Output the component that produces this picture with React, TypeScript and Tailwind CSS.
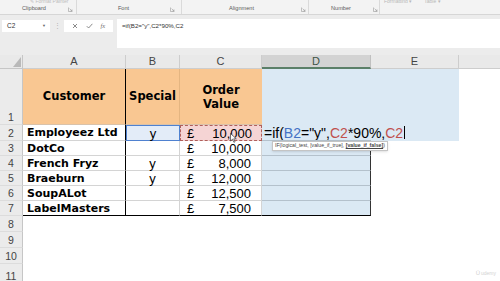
import React from "react";

const orders = [
  { name: "DotCo", special: "", value: "10,000" },
  { name: "French Fryz", special: "y", value: "8,000" },
  { name: "Braeburn", special: "y", value: "12,000" },
  { name: "SoupALot", special: "", value: "12,500" },
  { name: "LabelMasters", special: "", value: "7,500" },
];

function Launcher() {
  return (
    <svg width="5" height="5" viewBox="0 0 5 5" className="shrink-0">
      <path d="M0.5 0.5v4h4" fill="none" stroke="#9a9a9a" strokeWidth="0.6" />
      <path d="M1.6 1.6l2.4 2.4M4 2.4V4H2.4" fill="none" stroke="#9a9a9a" strokeWidth="0.6" />
    </svg>
  );
}

function Ribbon() {
  return (
    <div className="flex h-[15px] bg-[#f3f3f3] border-b border-[#d6d6d6] text-[5.6px] text-[#5a5a5a] leading-none">
      <div className="w-[77px] flex flex-col justify-between border-r border-[#dadada] pb-[2px]">
        <div className="h-[3px] leading-[2px] overflow-hidden pl-[30px] text-[#bdbdbd] text-[5px] whitespace-nowrap">
          ✎ Format Painter
        </div>
        <div className="flex items-center">
          <span className="w-[68px] text-center">Clipboard</span>
          <Launcher />
        </div>
      </div>
      <div className="w-[105px] flex flex-col justify-end border-r border-[#dadada] pb-[2px]">
        <div className="flex items-center">
          <span className="w-[93px] text-center">Font</span>
          <Launcher />
        </div>
      </div>
      <div className="w-[127px] flex flex-col justify-end border-r border-[#dadada] pb-[2px]">
        <div className="flex items-center">
          <span className="w-[119px] text-center">Alignment</span>
          <Launcher />
        </div>
      </div>
      <div className="w-[71px] flex flex-col justify-end border-r border-[#dadada] pb-[2px]">
        <div className="flex items-center">
          <span className="w-[64px] text-center">Number</span>
          <Launcher />
        </div>
      </div>
      <div className="flex-1 h-[3px] leading-[2px] overflow-hidden pl-[4px] text-[#b8b8b8] text-[5px] flex gap-[12px] whitespace-nowrap">
        <span>Formatting ▾</span>
        <span>Table ▾</span>
      </div>
    </div>
  );
}

function FormulaBar() {
  return (
    <div className="flex h-[40px] bg-[#ececec] pt-[4px] pb-[7px] font-['Liberation_Sans',Arial,sans-serif]">
      <div className="w-[117px] shrink-0 flex items-start pt-[1px]">
        <div className="ml-[2px] w-[48px] h-[12px] bg-white flex items-center justify-between pl-[5px] pr-[4px] text-[6.5px] text-[#333]">
          <span>C2</span>
          <span className="text-[4px] text-[#666]">▼</span>
        </div>
        <div className="w-[14px] text-center text-[#b0b0b0] text-[7px] leading-[12px]">⋮</div>
        <div className="w-[49px] h-[12px] bg-white flex items-center justify-around px-[4px]">
          <svg width="6" height="6" viewBox="0 0 6 6">
            <path d="M1 1l4 4M5 1l-4 4" stroke="#6e6e6e" strokeWidth="0.8" />
          </svg>
          <svg width="7" height="6" viewBox="0 0 7 6">
            <path d="M0.8 3.2l1.8 1.8 3.8-4.2" fill="none" stroke="#6e6e6e" strokeWidth="0.8" />
          </svg>
          <span className="text-[6.5px] italic text-[#6e6e6e] font-['Liberation_Serif',serif]">fx</span>
        </div>
      </div>
      <div className="flex-1 bg-white pl-[5px] pt-[3px] text-[6.2px] leading-[7px] text-[#333]">
        =if(B2="y",C2*90%,C2
      </div>
    </div>
  );
}

function RowHead({ label, className = "" }: { label: string; className?: string }) {
  return (
    <div
      className={`w-[23px] shrink-0 bg-[#ebebeb] border-r border-[#c6c6c6] border-b border-b-[#dcdcdc] flex justify-center items-end text-[10.5px] leading-[13px] text-[#444] ${className}`}
    >
      {label}
    </div>
  );
}

const bold = "font-['DejaVu_Sans',Verdana,sans-serif] font-bold text-black";

function Pointer() {
  return (
    <svg width="7" height="10" viewBox="0 0 7 10" className="absolute left-[49px] top-[7px]">
      <path d="M0.5 0.5v7.5l2-1.8 1.4 3.1 1.2-0.5-1.4-3h2.6z" fill="white" stroke="#222" strokeWidth="0.6" />
    </svg>
  );
}

export default function App() {
  return (
    <div className="relative w-[500px] h-[281px] overflow-hidden bg-white font-['Liberation_Sans',Arial,sans-serif]">
      <Ribbon />
      <FormulaBar />

      {/* column headers */}
      <div className="flex h-[14px] text-[11px] text-[#444] leading-none">
        <div className="w-[23px] shrink-0 bg-[#e9e9e9] border-r border-b border-[#c6c6c6]">
          <svg width="22" height="13" viewBox="0 0 22 13">
            <polygon points="21,2 21,12 13,12" fill="#b9b9b9" />
          </svg>
        </div>
        <div className="w-[103px] bg-[#e9e9e9] border-r border-b border-[#cdcdcd] flex items-center justify-center">A</div>
        <div className="w-[54px] bg-[#e9e9e9] border-r border-b border-[#cdcdcd] flex items-center justify-center">B</div>
        <div className="w-[82px] bg-[#e9e9e9] border-r border-b border-[#cdcdcd] flex items-center justify-center">C</div>
        <div className="w-[109px] bg-[#d3d3d3] border-r border-[#c0c0c0] border-b-2 border-b-[#5b7f68] flex items-center justify-center text-[#3d5546]">D</div>
        <div className="w-[88px] bg-[#e9e9e9] border-r border-b border-[#cdcdcd] flex items-center justify-center">E</div>
        <div className="flex-1 bg-[#e9e9e9] border-b border-[#cdcdcd]" />
      </div>

      {/* row 1 */}
      <div className="flex h-[56px] text-[11.5px]">
        <RowHead label="1" />
        <div className={`w-[103px] bg-[#f9c792] border-r border-r-black border-b border-b-[#d9c2aa] flex items-center justify-center ${bold}`}>
          Customer
        </div>
        <div className={`w-[54px] bg-[#f9c792] border-r border-r-[#e4b581] border-b border-b-[#d9c2aa] flex items-center justify-center ${bold}`}>
          Special
        </div>
        <div className={`w-[82px] bg-[#f9c792] border-b border-b-[#d9c2aa] flex items-center justify-center text-center leading-[14px] ${bold}`}>
          Order
          <br />
          Value
        </div>
        <div className="w-[109px] bg-[#dbe9f4]" />
        <div className="w-[88px] bg-[#dbe9f4]" />
        <div className="flex-1" />
      </div>

      {/* row 2 (editing) */}
      <div className="flex h-[16px]">
        <RowHead label="2" className="bg-[#dcdcdc]" />
        <div className={`w-[103px] border-r border-r-black border-b border-b-[#d4d4d4] flex items-center pl-[4px] text-[11px] leading-none ${bold}`}>
          Employeez Ltd
        </div>
        <div className="w-[54px] bg-[#e3ecf8] border border-[#4f81d0] flex items-center justify-center text-[13px] leading-none">
          y
        </div>
        <div className="relative w-[82px] bg-[#f5d4d4] border border-dashed border-[#b0605c] flex items-center justify-between pl-[6px] pr-[9px] text-[13px] leading-none">
          <span>£</span>
          <span>10,000</span>
          <Pointer />
        </div>
        <div className="relative w-[197px] bg-[#dbe9f4] flex flex-col">
          <div className="flex-1 flex items-center pl-[2px] whitespace-nowrap text-[14px] leading-none text-black">
            <span>=if(</span>
            <span className="text-[#4472c4]">B2</span>
            <span>="y",</span>
            <span className="text-[#c0504d]">C2</span>
            <span>*90%,</span>
            <span className="text-[#c0504d]">C2</span>
            <span className="ml-[1px] w-px h-[13px] bg-black" />
          </div>
          <div className="w-[109px] h-px bg-[#b4c1cc]" />
          <div className="absolute left-[10px] top-[16px] z-10 h-[10px] px-[2px] bg-white border border-[#c4c4c4] shadow-sm flex items-center whitespace-nowrap text-[5.2px] leading-none text-[#444]">
            IF(logical_test, [value_if_true],&nbsp;
            <span className="font-bold underline">[value_if_false]</span>)
          </div>
        </div>
        <div className="flex-1" />
      </div>

      {/* rows 3-7 */}
      {orders.map((o, i) => {
        const last = i === orders.length - 1;
        const bottom = last ? "border-b-black" : "border-b-[#d4d4d4]";
        return (
          <div key={o.name} className="flex h-[15px]">
            <RowHead label={String(i + 3)} />
            <div className={`w-[103px] border-r border-r-black border-b ${bottom} flex items-center pl-[4px] text-[11px] leading-none ${bold}`}>
              {o.name}
            </div>
            <div className={`w-[54px] border-r border-r-[#d4d4d4] border-b ${bottom} flex items-center justify-center text-[13px] leading-none`}>
              {o.special}
            </div>
            <div className={`w-[82px] border-r border-r-[#d4d4d4] border-b ${bottom} flex items-center justify-between pl-[7px] pr-[10px] text-[13px] leading-none`}>
              <span>£</span>
              <span>{o.value}</span>
            </div>
            <div className={`w-[109px] bg-[#dbe9f4] border-r border-r-[#333] border-b ${last ? "border-b-black" : "border-b-[#b4c1cc]"}`} />
            <div className="w-[88px]" />
            <div className="flex-1" />
          </div>
        );
      })}

      {/* empty rows */}
      {["8", "9", "10"].map((n) => (
        <div key={n} className="flex h-[16px]">
          <RowHead label={n} />
          <div className="flex-1" />
        </div>
      ))}
      <div className="flex h-[20px]">
        <RowHead label="11" />
        <div className="flex-1" />
      </div>

      <div className="absolute right-[4px] bottom-[3px] flex items-center gap-[1px] text-[5px] text-[#d2d2d2]">
        <span className="text-[6px]">Ü</span>
        <span>udemy</span>
      </div>
    </div>
  );
}
